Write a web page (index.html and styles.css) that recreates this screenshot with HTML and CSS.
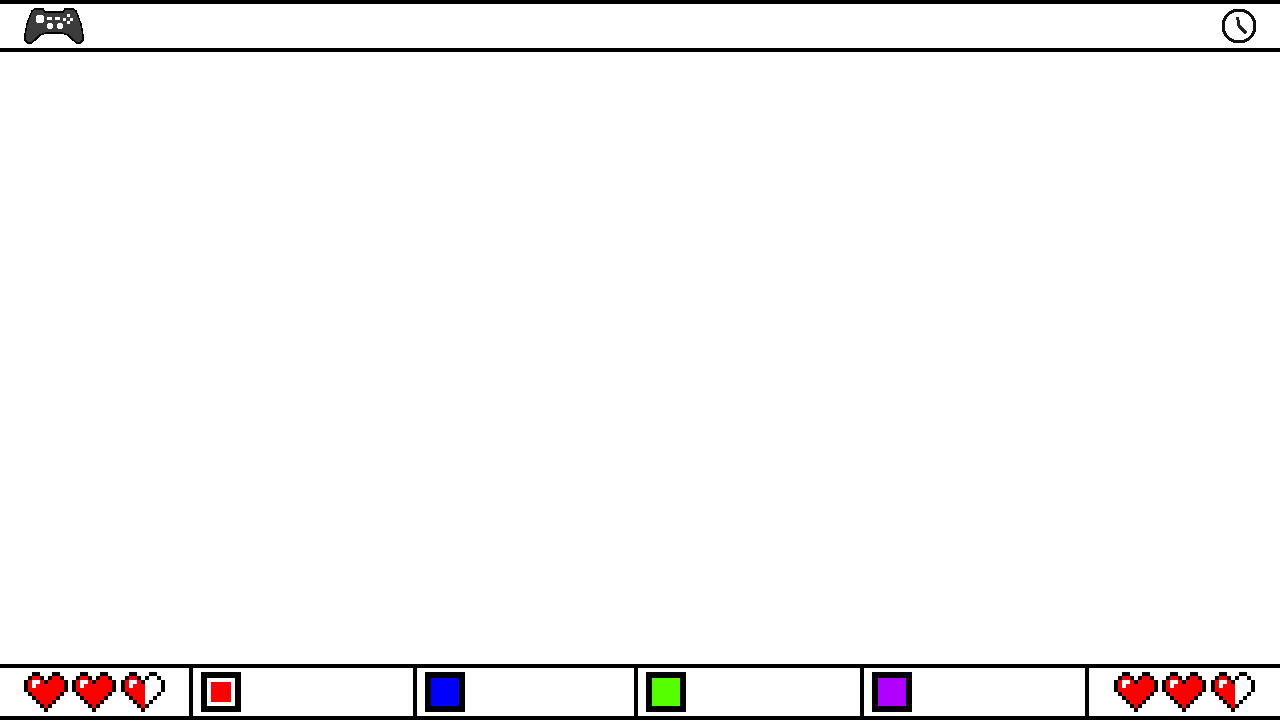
FILE: index.html
```html
<!DOCTYPE html>
<html lang="en">

<head>
    <meta charset="UTF-8" />
    <meta name="viewport" content="width=device-width, initial-scale=1" />
    <title>Game HUD</title>
    <link rel="stylesheet" href="styles.css">
</head>

<body>

    <svg class="defs" width="0" height="0">
        <defs>
            <path id="heart-outline" fill="#000" d="M2 0h2v1H2zM7 0h2v1H7zM1 1h1v1H1zM4 1h1v1H4zM6 1h1v1H6zM9 1h1v1H9zM0 2h1v3H0zM5 2h1v1H5zM10 2h1v3h-1zM1 5h1v1H1zM9 5h1v1H9zM2 6h1v1H2zM8 6h1v1H8zM3 7h1v1H3zM7 7h1v1H7zM4 8h1v1H4zM6 8h1v1H6zM5 9h1v1H5z" />
            <g id="heart-full">
                <path fill="#f00" d="M2 1h2v1H2zM7 1h2v1H7zM1 2h4v1H1zM6 2h4v1H6zM1 3h9v2H1zM2 5h7v1H2zM3 6h5v1H3zM4 7h3v1H4zM5 8h1v1H5z" />
                <path fill="#fff" d="M2 2h2v1H2zM2 3h1v1H2z" />
                <use href="#heart-outline" />
            </g>
            <g id="heart-half">
                <path fill="#f00" d="M2 1h2v1H2zM1 2h4v1H1zM1 3h5v2H1zM2 5h4v1H2zM3 6h3v1H3zM4 7h2v1H4zM5 8h1v1H5z" />
                <path fill="#fff" d="M2 2h2v1H2zM2 3h1v1H2z" />
                <use href="#heart-outline" />
            </g>
        </defs>
    </svg>

    <div class="screen">
        <header class="topbar">
            <svg class="controller" viewBox="0 0 60 36" width="60" height="36">
                <path fill="#3c3c3c" stroke="#000" stroke-width="1.500" d="M30 4H21L19 1H11L8 3L6 8L3 16L1 27V32L4 35H7L11 32L16 27L22 25H38L44 27L49 32L53 35H56L59 32V27L57 16L54 8L52 3L49 1H41L39 4Z" />
                <circle fill="#fff" cx="16" cy="11" r="4.500" />
                <path fill="#fff" d="M23 9h5v3h-5zM31 9h5v3h-5z" />
                <circle fill="#fff" cx="26" cy="18" r="3" />
                <circle fill="#fff" cx="36" cy="18" r="3" />
                <path fill="#fff" d="M43 6h3v3h-3zM39 10h3v3h-3zM46 10h3v3h-3zM43 13h3v3h-3z" />
            </svg>
            <svg class="clock" viewBox="0 0 36 36" width="36" height="36">
                <circle fill="#fff" stroke="#111" stroke-width="3" cx="18" cy="18" r="16" />
                <path fill="none" stroke="#222" stroke-width="3" d="M16.500 9L18 18L25.500 25.500" />
            </svg>
        </header>

        <main class="playfield"></main>

        <footer class="hud">
            <div class="hud-cell hearts hearts-left">
                <svg class="heart" viewBox="0 0 11 10"><use href="#heart-full" /></svg>
                <svg class="heart" viewBox="0 0 11 10"><use href="#heart-full" /></svg>
                <svg class="heart" viewBox="0 0 11 10"><use href="#heart-half" /></svg>
            </div>
            <div class="hud-cell">
                <div class="slot slot-selected"><span class="swatch swatch-red"></span></div>
            </div>
            <div class="hud-cell">
                <div class="slot"><span class="swatch swatch-blue"></span></div>
            </div>
            <div class="hud-cell">
                <div class="slot"><span class="swatch swatch-green"></span></div>
            </div>
            <div class="hud-cell">
                <div class="slot"><span class="swatch swatch-purple"></span></div>
            </div>
            <div class="hud-cell hearts hearts-right">
                <svg class="heart" viewBox="0 0 11 10"><use href="#heart-full" /></svg>
                <svg class="heart" viewBox="0 0 11 10"><use href="#heart-full" /></svg>
                <svg class="heart" viewBox="0 0 11 10"><use href="#heart-half" /></svg>
            </div>
        </footer>
    </div>

</body>

</html>
```

FILE: styles.css
```css
html,
body {
    margin: 0;
    height: 100%;
    background-color: #ffffff;
    font-family: "Liberation Sans", sans-serif;
}

.defs {
    display: block;
    height: 0;
}

.screen {
    display: flex;
    flex-direction: column;
    height: 100vh;
    box-sizing: border-box;
}

.topbar {
    display: flex;
    justify-content: space-between;
    align-items: center;
    height: 52px;
    box-sizing: border-box;
    padding: 0 23px 0 24px;
    border-top: 4px solid #000000;
    border-bottom: 4px solid #000000;
}

.controller,
.clock {
    display: block;
    shape-rendering: crispEdges;
}

.playfield {
    flex: 1;
}

.hud {
    display: grid;
    grid-template-columns: 193px 224px 221px 226px 225px 191px;
    height: 56px;
    box-sizing: border-box;
    border-top: 4px solid #000000;
    border-bottom: 4px solid #000000;
}

.hud-cell {
    display: flex;
    align-items: center;
    box-sizing: border-box;
    padding-left: 8px;
    border-right: 4px solid #000000;
}

.hud-cell:last-child {
    border-right: none;
}

.hearts {
    gap: 4.4px;
}

.hearts-left {
    padding-left: 24px;
}

.hearts-right {
    padding-left: 25px;
}

.heart {
    display: block;
    width: 44px;
    height: 40px;
    shape-rendering: crispEdges;
}

.slot {
    display: flex;
    justify-content: center;
    align-items: center;
    width: 40px;
    height: 40px;
    box-sizing: border-box;
    border: 6px solid #000000;
}

.swatch {
    display: block;
    width: 100%;
    height: 100%;
}

.slot-selected {
    padding: 4px;
}

.swatch-red {
    background-color: #ff0000;
}

.swatch-blue {
    background-color: #0000ff;
}

.swatch-green {
    background-color: #55ff00;
}

.swatch-purple {
    background-color: #b000ff;
}
```
